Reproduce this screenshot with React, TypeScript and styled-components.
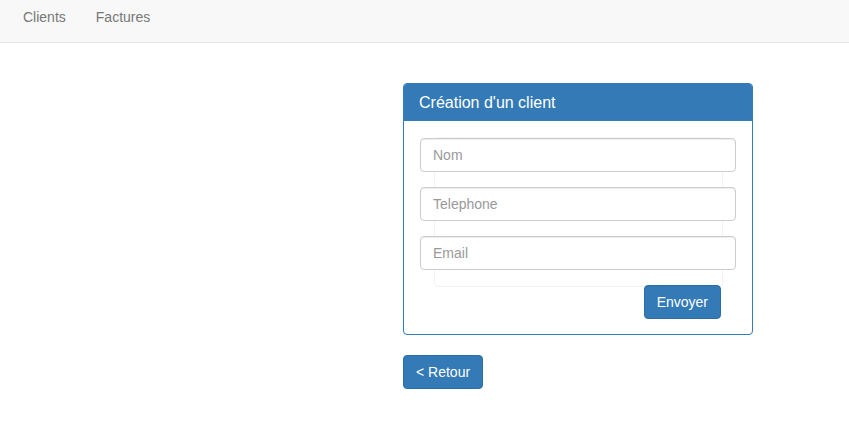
import React from "react";
import styled, { createGlobalStyle } from "styled-components";

const Global = createGlobalStyle`
  html, body { margin: 0; padding: 0; background: #fff; }
  body { font-family: "Liberation Sans", Arial, sans-serif; font-size: 14px; line-height: 20px; color: #333; }
  * { box-sizing: border-box; }
`;

const Navbar = styled.nav`
  height: 43px;
  background: #f8f8f8;
  border-bottom: 1px solid #e7e7e7;
  display: flex;
  padding-left: 8px;
`;

const NavLink = styled.a`
  display: block;
  padding: 7px 15px;
  color: #777;
  text-decoration: none;
  font-size: 14px;
  line-height: 20px;
`;

const Main = styled.main`
  padding: 40px 0 0 403px;
`;

const Column = styled.div`
  width: 350px;
`;

const Panel = styled.section`
  border: 1px solid #337ab7;
  border-radius: 4px;
  background: #fff;
  margin-bottom: 20px;
`;

const PanelHeading = styled.div`
  background: #337ab7;
  color: #fff;
  padding: 9px 15px 8px;
  font-size: 16px;
  line-height: 20px;
  border-radius: 3px 3px 0 0;
`;

const PanelBody = styled.form`
  padding: 16px 15px 15px 15px;
`;

const Well = styled.div`
  margin: 0 14px 0 15px;
  border: 1px solid #f3f3f3;
  border-radius: 4px;
  padding-bottom: 16px;
`;

const Input = styled.input`
  display: block;
  width: calc(100% + 29px);
  margin: 0 -14px 15px -15px;
  height: 34px;
  padding: 6px 12px;
  font-family: "Liberation Sans", Arial, sans-serif;
  font-size: 14px;
  color: #555;
  background: #fff;
  border: 1px solid #ccc;
  border-radius: 4px;
  box-shadow: inset 0 1px 1px rgba(0, 0, 0, 0.075);
  position: relative;
  &::placeholder { color: #999; }
  &:last-child { margin-bottom: 0; }
`;

const Actions = styled.div`
  display: flex;
  justify-content: flex-end;
  padding-right: 16px;
  margin-top: -2px;
`;

const Button = styled.button`
  height: 34px;
  padding: 6px 12px;
  font-family: "Liberation Sans", Arial, sans-serif;
  font-size: 14px;
  line-height: 20px;
  color: #fff;
  background: #337ab7;
  border: 1px solid #2e6da4;
  border-radius: 4px;
  cursor: pointer;
`;

export default function App() {
  return (
    <>
      <Global />
      <Navbar>
        <NavLink href="#">Clients</NavLink>
        <NavLink href="#">Factures</NavLink>
      </Navbar>
      <Main>
        <Column>
          <Panel>
            <PanelHeading>Création d'un client</PanelHeading>
            <PanelBody onSubmit={(e) => e.preventDefault()}>
              <Well>
                <Input placeholder="Nom" />
                <Input placeholder="Telephone" />
                <Input placeholder="Email" />
              </Well>
              <Actions>
                <Button type="submit">Envoyer</Button>
              </Actions>
            </PanelBody>
          </Panel>
          <Button type="button">&lt; Retour</Button>
        </Column>
      </Main>
    </>
  );
}
